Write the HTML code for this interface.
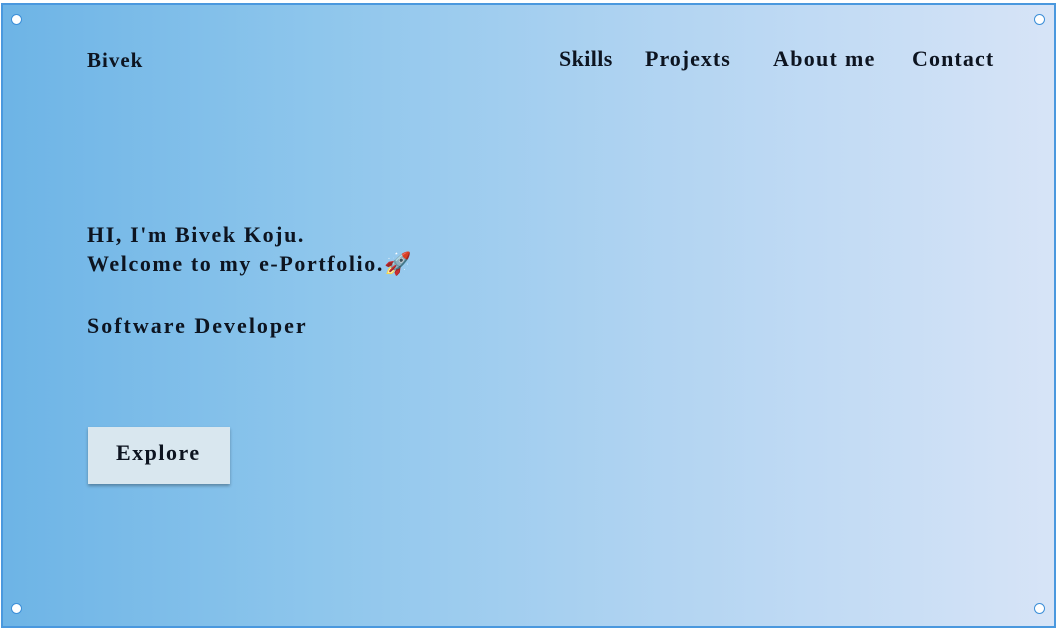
<!DOCTYPE html>
<html><head><style>
html,body{margin:0;padding:0;width:1057px;height:635px;background:#fff;overflow:hidden;position:relative}
.frame{position:absolute;left:1px;top:3px;width:1051px;height:621px;border:2px solid #4a98de;background:linear-gradient(90deg,#6db4e6 0%,#8ec6ec 30%,#b4d5f2 65%,#d7e4f7 100%)}
.h{position:absolute;width:9px;height:9px;border:1.5px solid #3c8fd8;border-radius:50%;background:#fff}
.t{position:absolute;font-family:"Liberation Serif",serif;font-weight:bold;color:#0d1420;white-space:nowrap}
.btn{position:absolute;left:88px;top:427px;width:142px;height:57px;background:#d9e7ef;box-shadow:0 2px 3px rgba(0,0,0,.3)}
</style></head><body>
<div class="frame"></div>
<div class="h" style="left:11px;top:14px"></div>
<div class="h" style="left:1034px;top:14px"></div>
<div class="h" style="left:11px;top:603px"></div>
<div class="h" style="left:1034px;top:603px"></div>
<div class="t" style="left:87px;top:48px;font-size:21px;letter-spacing:1px">Bivek</div>
<div class="t" style="left:559px;top:46px;font-size:22px;letter-spacing:0.4px">Skills</div>
<div class="t" style="left:645px;top:46px;font-size:22px;letter-spacing:1px">Projexts</div>
<div class="t" style="left:773px;top:46px;font-size:22px;letter-spacing:1.3px">About me</div>
<div class="t" style="left:912px;top:46px;font-size:22px;letter-spacing:1.1px">Contact</div>
<div class="t" style="left:87px;top:220px;font-size:22px;line-height:29px;letter-spacing:1.6px">HI, I'm Bivek Koju.<br>Welcome to my e-Portfolio.🚀</div>
<div class="t" style="left:87px;top:313px;font-size:22px;letter-spacing:2px">Software Developer</div>
<div class="btn"></div>
<div class="t" style="left:116px;top:440px;font-size:22px;letter-spacing:1.5px">Explore</div>
</body></html>
